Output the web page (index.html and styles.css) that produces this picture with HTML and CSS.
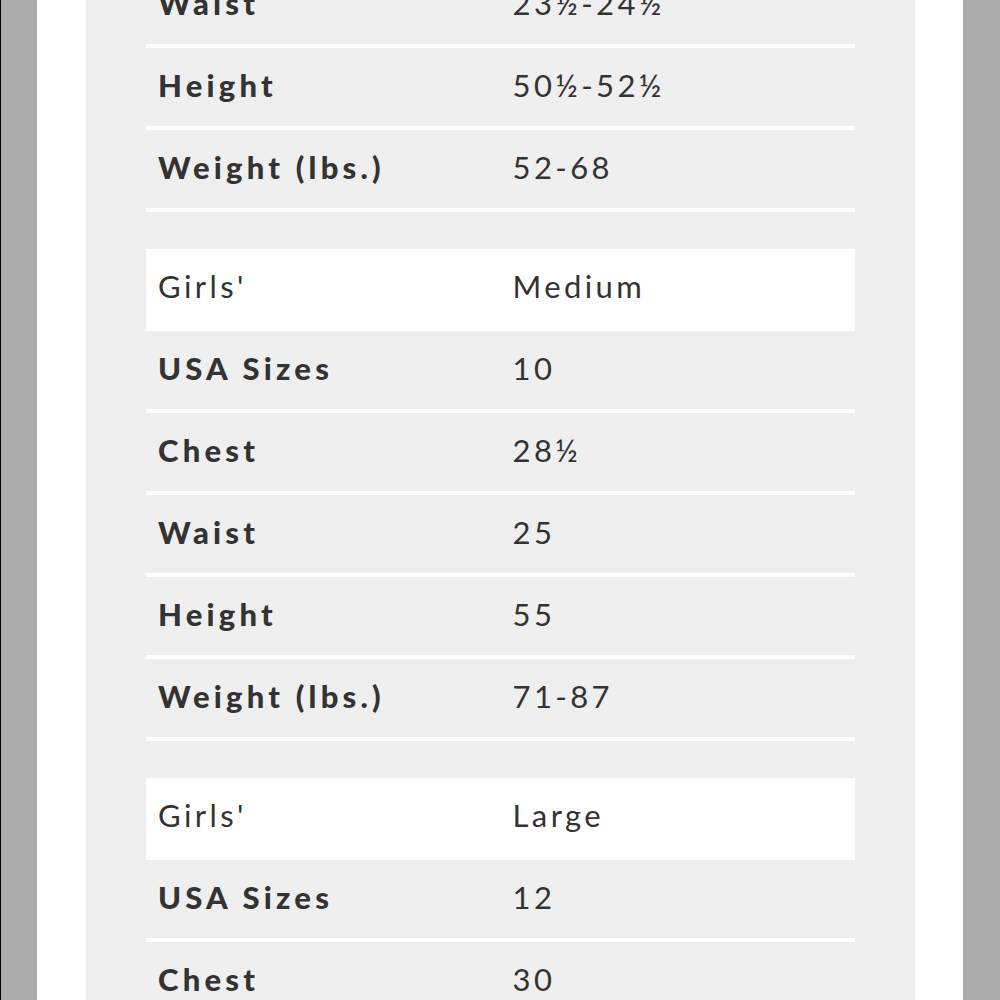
FILE: index.html
```html
<!DOCTYPE html>
<html>
<head>
<meta charset="utf-8">
<link rel="stylesheet" href="styles.css">
</head>
<body>
<div class="frame">
  <div class="sheet">
    <div class="panel">
      <div class="group">
        <div class="row head"><div class="cell">Girls'</div><div class="cell">Small</div></div>
        <div class="row"><div class="cell label">USA Sizes</div><div class="cell">8</div></div>
        <div class="row"><div class="cell label">Chest</div><div class="cell">26½</div></div>
        <div class="row"><div class="cell label">Waist</div><div class="cell">23½-24½</div></div>
        <div class="row"><div class="cell label">Height</div><div class="cell">50½-52½</div></div>
        <div class="row"><div class="cell label">Weight (lbs.)</div><div class="cell">52-68</div></div>
      </div>
      <div class="group">
        <div class="row head"><div class="cell">Girls'</div><div class="cell">Medium</div></div>
        <div class="row"><div class="cell label">USA Sizes</div><div class="cell">10</div></div>
        <div class="row"><div class="cell label">Chest</div><div class="cell">28½</div></div>
        <div class="row"><div class="cell label">Waist</div><div class="cell">25</div></div>
        <div class="row"><div class="cell label">Height</div><div class="cell">55</div></div>
        <div class="row"><div class="cell label">Weight (lbs.)</div><div class="cell">71-87</div></div>
      </div>
      <div class="group">
        <div class="row head"><div class="cell">Girls'</div><div class="cell">Large</div></div>
        <div class="row"><div class="cell label">USA Sizes</div><div class="cell">12</div></div>
        <div class="row"><div class="cell label">Chest</div><div class="cell">30</div></div>
        <div class="row"><div class="cell label">Waist</div><div class="cell">26½</div></div>
        <div class="row"><div class="cell label">Height</div><div class="cell">59</div></div>
        <div class="row"><div class="cell label">Weight (lbs.)</div><div class="cell">88-106</div></div>
      </div>
    </div>
  </div>
</div>
</body>
</html>
```
FILE: styles.css
```css
html, body {
  margin: 0;
  padding: 0;
  height: 1000px;
  overflow: hidden;
  background: #aaaaaa;
}
.frame {
  height: 1000px;
  overflow: hidden;
  border-left: 1px solid #000;
  padding: 0 37px 0 36px;
  background: #ababab;
}
.sheet {
  background: #ffffff;
  height: 1000px;
  padding: 0 48px 0 49px;
  overflow: hidden;
}
.panel {
  background: #efefef;
  margin-top: -280px;
  padding: 0 60px 0 60px;
  min-height: 1400px;
  display: flex;
  flex-direction: column;
  gap: 37px;
}
.group {
  display: flex;
  flex-direction: column;
}
.row {
  display: grid;
  grid-template-columns: 1fr 1fr;
  height: 78px;
  border-bottom: 4px solid #ffffff;
  align-items: center;
  font-family: Lato, "Open Sans", sans-serif;
  font-size: 31px;
  line-height: 36px;
  letter-spacing: 3.4px;
  color: #333333;
}
.row.head {
  background: #ffffff;
}
.cell {
  padding-left: 12px;
  padding-bottom: 4px;
}
.label {
  font-weight: 900;
  letter-spacing: 4.2px;
}
```
